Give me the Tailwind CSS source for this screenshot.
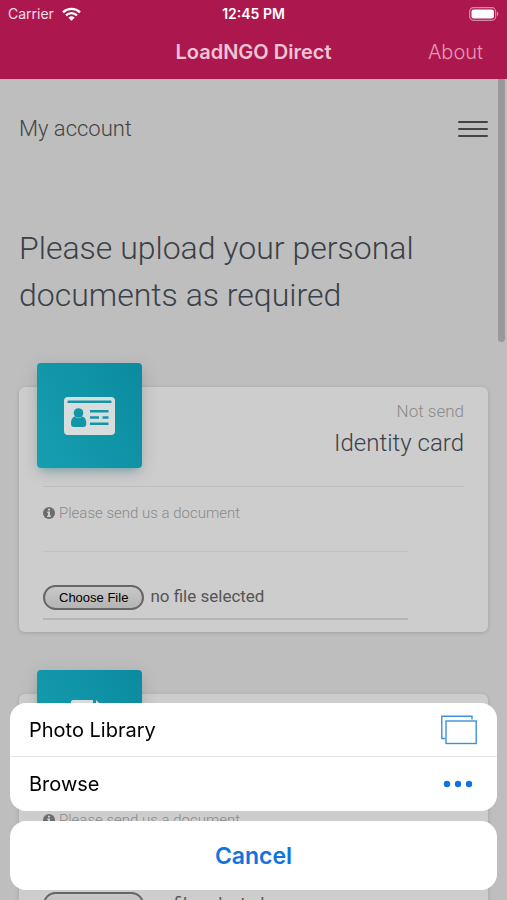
<!DOCTYPE html>
<html lang="en">
<head>
<meta charset="utf-8">
<meta name="viewport" content="width=device-width, initial-scale=1">
<title>LoadNGO Direct</title>
<script src="https://cdn.jsdelivr.net/npm/@tailwindcss/browser@4"></script>
</head>
<body class="flex h-screen flex-col overflow-hidden bg-[#bebebe] font-['Roboto',sans-serif] text-[#3c4048]">

<header class="shrink-0 bg-[#ac184e] font-['Inter',sans-serif] text-white">
  <div class="grid h-7 grid-cols-3 items-center pr-2 pl-2 text-sm">
    <div class="flex items-center gap-2 text-[#f6dfe8]">
      <span>Carrier</span>
      <svg class="h-3.5 w-[19px]" viewBox="0 0 19 14" fill="none" stroke="#fff" stroke-width="2.3" aria-hidden="true">
        <path d="M1 5.3a12.3 12.3 0 0 1 17 0M4 8.4a8 8 0 0 1 11 0"/>
        <path d="M9.500 13.700 6.400 10.700a4.500 4.500 0 0 1 6.200 0z" fill="#fff" stroke="none"/>
      </svg>
    </div>
    <div class="text-center font-semibold">12:45 PM</div>
    <svg class="h-3.5 w-[30px] justify-self-end" viewBox="0 0 30 14" aria-label="Battery full">
      <rect x=".7" y=".7" width="26" height="12.600" rx="3.800" fill="none" stroke="#d98aa8" stroke-width="1.200"/>
      <rect x="2.500" y="2.500" width="22.400" height="9" rx="2" fill="#fff"/>
      <path d="M28 4.800c1.700.6 1.700 3.800 0 4.400z" fill="#d98aa8"/>
    </svg>
  </div>
  <div class="grid h-[51px] grid-cols-[1fr_auto_1fr] items-center px-6 pb-1">
    <h1 class="col-start-2 text-xl font-semibold text-[#efc4d4]">LoadNGO Direct</h1>
    <a href="#about" class="justify-self-end text-xl font-light text-[#e29ab7]">About</a>
  </div>
</header>

<div class="relative min-h-0 flex-1 overflow-hidden">
  <div class="absolute top-0 right-0.5 h-[263px] w-[7px] rounded-b-full bg-[#999]"></div>

  <main class="px-[19px]">
    <nav class="flex h-[98px] items-center justify-between">
      <a href="#account" class="text-[22px] font-light text-[#444]">My account</a>
      <button type="button" aria-label="Open menu" class="flex w-[30px] flex-col gap-[5px] pt-0.5">
        <span class="h-0.5 w-full rounded-full bg-[#444]"></span>
        <span class="h-0.5 w-full rounded-full bg-[#444]"></span>
        <span class="h-0.5 w-full rounded-full bg-[#444]"></span>
      </button>
    </nav>

    <h2 class="mt-12 text-[32px] leading-[47px] font-light">Please upload your personal documents as required</h2>

    <section class="mt-[68px] rounded-md bg-[#cdcdcd] px-6 shadow-[0_1px_4px_rgba(0,0,0,0.16)]">
      <div class="flex h-[100px] justify-between border-b border-[#bdc0c0]">
        <div class="-mt-6 -ml-1.5 grid size-[105px] place-items-center rounded-sm bg-linear-60 from-[#169fb0] to-[#0b8ba0] shadow-[0_4px_18px_rgba(0,0,0,0.13),0_6px_8px_-4px_rgba(10,145,165,0.4)]">
          <svg class="h-[38px] w-[51px]" viewBox="0 0 51 38" aria-hidden="true">
            <rect width="51" height="38" rx="4" fill="#d7dcdd"/>
            <g fill="#1395a8">
              <path d="M3.500 6V4.500Q3.500 3.500 4.500 3.500H46.500Q47.500 3.500 47.500 4.500V6z"/>
              <circle cx="14.500" cy="16" r="4.800"/>
              <path d="M10.500 19.500C8 20.500 7 23 7 26.500Q7 30 10 30H19Q22.300 30 22.300 26.500C22.300 23 21.200 20.500 18.600 19.500Q14.500 23 10.500 19.500z"/>
              <path d="M26 13h18.500v2.500H26zM26 19.300h9v2.500h-9zM38.500 19.300h6v2.500h-6zM26 25.600h18.500v2.500H26z"/>
            </g>
          </svg>
        </div>
        <div class="pt-3 text-right font-light">
          <p class="text-[17px] leading-6 text-[#8a8a8a]">Not send</p>
          <h3 class="text-2xl leading-10">Identity card</h3>
        </div>
      </div>
      <p class="mr-14 flex h-[65px] items-start gap-1 border-b border-[#c2c2c2] pt-4 text-[15px] leading-5 font-light text-[#8a8a8a]">
        <svg class="mt-1 size-3 shrink-0" viewBox="0 0 12 12" aria-hidden="true">
          <circle cx="6" cy="6" r="6" fill="#6c6c6c"/>
          <path d="M5 1.800h2v1.700H5zM4.200 4.500H7v4h.9V10H4.100V8.500H5V6h-.8z" fill="#cdcdcd"/>
        </svg>
        Please send us a document
      </p>
      <div class="pt-8 pb-3">
        <div class="mr-14 flex h-9 items-start gap-1.5 border-b-2 border-[#b5b5b5]">
          <input id="identity-file" type="file" class="sr-only">
          <label for="identity-file" class="mt-px flex h-[25px] items-center rounded-full border-2 border-[#666] bg-linear-to-b from-[#c8c8c8] to-[#b4b4b4] px-3.5 font-['Liberation_Sans',Arial,sans-serif] text-[13px] text-black">Choose File</label>
          <span class="text-[17px] leading-6 text-[#555]">no file selected</span>
        </div>
      </div>
    </section>

    <section class="mt-[62px] rounded-md bg-[#cdcdcd] px-6 shadow-[0_1px_4px_rgba(0,0,0,0.16)]">
      <div class="flex h-[100px] justify-between border-b border-[#bdc0c0]">
        <div class="-mt-6 -ml-1.5 grid size-[105px] place-items-center rounded-sm bg-linear-60 from-[#169fb0] to-[#0b8ba0] shadow-[0_4px_18px_rgba(0,0,0,0.13),0_6px_8px_-4px_rgba(10,145,165,0.4)]">
          <svg class="h-[46px] w-[38px]" viewBox="0 0 38 46" aria-hidden="true">
            <path d="M2 0H22V12H36V44Q36 46 34 46H2Q0 46 0 44V2Q0 0 2 0zM25 0 35 9.500H25z" fill="#d7dcdd"/>
          </svg>
        </div>
      </div>
      <p class="mr-14 flex h-[65px] items-start gap-1 border-b border-[#c2c2c2] pt-4 text-[15px] leading-5 font-light text-[#8a8a8a]">
        <svg class="mt-1 size-3 shrink-0" viewBox="0 0 12 12" aria-hidden="true">
          <circle cx="6" cy="6" r="6" fill="#6c6c6c"/>
          <path d="M5 1.800h2v1.700H5zM4.200 4.500H7v4h.9V10H4.100V8.500H5V6h-.8z" fill="#cdcdcd"/>
        </svg>
        Please send us a document
      </p>
      <div class="pt-8 pb-3">
        <div class="mr-14 flex h-9 items-start gap-1.5 border-b-2 border-[#b5b5b5]">
          <input id="second-file" type="file" class="sr-only">
          <label for="second-file" class="mt-px flex h-[25px] items-center rounded-full border-2 border-[#666] bg-linear-to-b from-[#c8c8c8] to-[#b4b4b4] px-3.5 font-['Liberation_Sans',Arial,sans-serif] text-[13px] text-black">Choose File</label>
          <span class="text-[17px] leading-6 text-[#555]">no file selected</span>
        </div>
      </div>
    </section>
  </main>
</div>

<div role="dialog" aria-label="Choose a document source" class="fixed inset-x-2.5 bottom-2.5 flex flex-col gap-2.5 font-['Inter',sans-serif] text-xl text-black">
  <div class="overflow-hidden rounded-2xl bg-white">
    <button type="button" class="flex h-[54px] w-full items-center justify-between border-b border-[#e4e4e4] pr-5 pl-[19px]">
      Photo Library
      <svg class="h-[30px] w-9" viewBox="0 0 36 30" fill="none" stroke="#3f8fdc" stroke-width="1.400" aria-hidden="true">
        <path d="M4 23.500H.8V1.200H31V4.500"/>
        <rect x="5" y="6" width="30.200" height="22.500"/>
      </svg>
    </button>
    <button type="button" class="flex h-[54px] w-full items-center justify-between pr-6 pl-[19px]">
      Browse
      <svg class="h-2 w-[30px]" viewBox="0 0 30 8" fill="#1272dc" aria-hidden="true">
        <circle cx="4" cy="4" r="3.200"/><circle cx="15" cy="4" r="3.200"/><circle cx="26" cy="4" r="3.200"/>
      </svg>
    </button>
  </div>
  <button type="button" class="h-[69px] w-full rounded-2xl bg-white pt-0.5 text-[23px] font-semibold text-[#1273e0]">Cancel</button>
</div>

</body>
</html>
